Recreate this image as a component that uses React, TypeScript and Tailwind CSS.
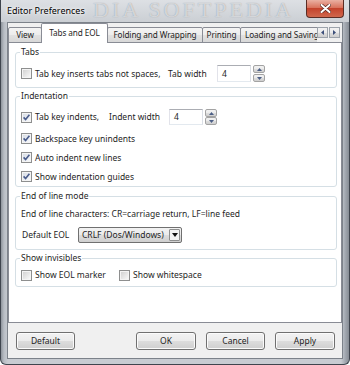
import React from "react";

const btnBg =
  "bg-[linear-gradient(to_bottom,#f2f2f2_0%,#ebebeb_50%,#dddddd_51%,#cfcfcf_100%)]";
const tabBg =
  "bg-[linear-gradient(to_bottom,#f4f4f4_0%,#ececec_50%,#e1e1e1_51%,#d8d8d8_100%)]";

function Check({ checked = false }: { checked?: boolean }) {
  return (
    <span className="relative w-[11px] h-[11px] shrink-0 border border-[#8e8f8f] bg-[#f4f4f4]">
      <span
        className={`absolute inset-[1px] ${
          checked
            ? "bg-[linear-gradient(135deg,#d9dee6,#f7f8fa)]"
            : "bg-[linear-gradient(135deg,#d3d3d3,#f7f7f7)]"
        }`}
      />
      {checked && (
        <svg className="absolute left-0 top-0" width="9" height="9" viewBox="0 0 9 9">
          <path d="M1.6 4.4 L3.6 6.6 L7.4 1.8" fill="none" stroke="#4b5d8c" strokeWidth="1.6" />
        </svg>
      )}
    </span>
  );
}

function Spin() {
  return (
    <div className="ml-[2px] flex h-full w-[12px] flex-col justify-between">
      <span className={`flex h-[8px] items-center justify-center rounded-[2px] border border-[#a3a3a3] ${btnBg}`}>
        <svg width="5" height="3" viewBox="0 0 5 3">
          <path d="M0 3 L2.5 0 L5 3Z" fill="#4c5f86" />
        </svg>
      </span>
      <span className={`flex h-[8px] items-center justify-center rounded-[2px] border border-[#a3a3a3] ${btnBg}`}>
        <svg width="5" height="3" viewBox="0 0 5 3">
          <path d="M0 0 L2.5 3 L5 0Z" fill="#4c5f86" />
        </svg>
      </span>
    </div>
  );
}

function Num() {
  return (
    <div className="flex h-full w-[34px] items-center border border-[#abadb3] border-b-[#e3e9ef] border-l-[#e2e3ea] border-r-[#dbdfe6] bg-white pl-[4px]">
      4
    </div>
  );
}

function Group({
  label,
  className,
  children,
}: {
  label: string;
  className: string;
  children: React.ReactNode;
}) {
  return (
    <div className={`relative rounded-[3px] border border-[#d5dfe5] pl-[5px] ${className}`}>
      <span className="absolute left-[4px] top-[-7px] bg-white px-[1px] leading-[12px]">{label}</span>
      {children}
    </div>
  );
}

function Btn({ label, w }: { label: string; w: string }) {
  return (
    <div
      className={`flex h-[18px] ${w} items-center justify-center rounded-[3px] border border-[#707070] ${btnBg} shadow-[inset_0_0_0_1px_#fbfbfb]`}
    >
      {label}
    </div>
  );
}

function Tab({ label, w, active = false }: { label: string; w: string; active?: boolean }) {
  if (active) {
    return (
      <div className={`-ml-[1px] flex h-[20px] ${w} shrink-0 items-center justify-center overflow-hidden rounded-t-[2px] border border-b-0 border-[#898c95] bg-white pb-[2px]`}>
        {label}
      </div>
    );
  }
  return (
    <div className={`-ml-[1px] flex h-[16px] ${w} shrink-0 items-center justify-center overflow-hidden rounded-t-[2px] border border-[#898c95] ${tabBg}`}>
      {label}
    </div>
  );
}

export default function App() {
  return (
    <div className="relative h-[365px] w-[350px] overflow-hidden rounded-b-[6px] border-x border-b border-[#3f454e] bg-[linear-gradient(to_right,#8e949c_0px,#b8bdc4_3px,#c8ccd2_7px,#c8ccd2_340px,#a4aab2_344px,#80868e_349px)] font-['Noto_Sans',sans-serif] text-[8.5px] leading-[12px] text-[#1e1e1e]">
      {/* title bar */}
      <div className="relative flex h-[22px] items-center overflow-hidden bg-[linear-gradient(to_bottom,#dde0e4,#cbcfd4)] pl-[6px]">
        <span className="absolute left-[92px] top-[-3px] whitespace-nowrap font-['Liberation_Serif',serif] text-[22px] leading-[26px] tracking-[3px] text-white/60 [text-shadow:0_0_1px_#8a9098]">
          DIA SOFTPEDIA
        </span>
        <span className="relative text-[9px] text-black [text-shadow:0_0_4px_#fff,0_0_2px_#fff]">
          Editor Preferences
        </span>
      </div>

      {/* close button */}
      <div className="absolute right-[5px] top-0 flex h-[18px] w-[38px] items-center justify-center rounded-b-[4px] border border-t-0 border-[#5b2d25] bg-[linear-gradient(to_bottom,#eab0a2_0%,#d9735d_45%,#c4432c_50%,#d0674c_100%)]">
        <svg width="11" height="9" viewBox="0 0 11 9">
          <path d="M1.5 1 L9.5 8 M9.5 1 L1.5 8" stroke="#5a2a22" strokeWidth="3.4" strokeLinecap="round" />
          <path d="M1.5 1 L9.5 8 M9.5 1 L1.5 8" stroke="#ffffff" strokeWidth="2" strokeLinecap="round" />
        </svg>
      </div>

      {/* client area */}
      <div className="relative ml-[6px] flex h-[337px] w-[336px] flex-col border border-[#7c828a] bg-[#f0f0f0]">
        {/* tabs */}
        <div className="relative z-10 flex h-[20px] w-[309px] items-end overflow-hidden whitespace-nowrap pl-[1px] text-[8.2px] tracking-[-0.1px]">
          <Tab label="View" w="w-[34px]" />
          <Tab label="Tabs and EOL" w="w-[67px]" active />
          <Tab label="Folding and Wrapping" w="w-[96px]" />
          <Tab label="Printing" w="w-[39px]" />
          <div className={`-ml-[1px] flex h-[16px] w-[100px] shrink-0 items-center rounded-t-[2px] border border-[#898c95] pl-[4px] ${tabBg}`}>
            Loading and Saving
          </div>
        </div>
        <div className="absolute left-[309px] top-[4px] z-20 flex gap-[1px]">
          <span className={`flex h-[11px] w-[11px] items-center justify-center border border-[#9ca3ab] ${btnBg}`}>
            <svg width="3" height="5" viewBox="0 0 3 5">
              <path d="M3 0 L0 2.5 L3 5Z" fill="#3c4f7a" />
            </svg>
          </span>
          <span className={`flex h-[11px] w-[11px] items-center justify-center border border-[#9ca3ab] ${btnBg}`}>
            <svg width="3" height="5" viewBox="0 0 3 5">
              <path d="M0 0 L3 2.5 L0 5Z" fill="#3c4f7a" />
            </svg>
          </span>
        </div>

        {/* tab panel */}
        <div className="-mt-[1px] h-[281px] w-[334px] border border-[#898c95] bg-white pl-[6px] pr-[4px] pt-[9px]">
          <Group label="Tabs" className="pb-[5px] pt-[12px]">
            <div className="flex h-[17px] items-center">
              <Check />
              <span className="ml-[3px] w-[133px]">Tab key inserts tabs not spaces,</span>
              <span className="w-[49px]">Tab width</span>
              <Num />
              <Spin />
            </div>
          </Group>

          <Group label="Indentation" className="mt-[8px] pt-[12px]">
            <div className="flex h-[16px] items-center">
              <Check checked />
              <span className="ml-[3px] w-[74px]">Tab key indents,</span>
              <span className="w-[60px]">Indent width</span>
              <Num />
              <Spin />
            </div>
            <div className="mt-[4px] flex h-[19px] items-center">
              <Check checked />
              <span className="ml-[3px]">Backspace key unindents</span>
            </div>
            <div className="flex h-[19px] items-center">
              <Check checked />
              <span className="ml-[3px]">Auto indent new lines</span>
            </div>
            <div className="flex h-[19px] items-center">
              <Check checked />
              <span className="ml-[3px]">Show indentation guides</span>
            </div>
          </Group>

          <Group label="End of line mode" className="mt-[9px] pb-[6px] pt-[9px]">
            <div className="flex h-[16px] items-center">
              End of line characters: CR=carriage return, LF=line feed
            </div>
            <div className="mt-[5px] flex h-[16px] items-center">
              <span className="w-[57px] pl-[1px]">Default EOL</span>
              <div className={`flex h-full w-[104px] items-center justify-between rounded-[2px] border border-[#707070] ${btnBg} pl-[3px] pr-[1px]`}>
                <span>CRLF (Dos/Windows)</span>
                <span className="flex h-[12px] w-[11px] items-center justify-center rounded-[1px] border border-[#8e8f8f] bg-[#f3f3f3]">
                  <svg width="6" height="4" viewBox="0 0 6 4">
                    <path d="M0 0 L6 0 L3 4Z" fill="#111" />
                  </svg>
                </span>
              </div>
            </div>
          </Group>

          <Group label="Show invisibles" className="mt-[8px] pb-[3px] pt-[8px]">
            <div className="flex h-[16px] items-center">
              <Check />
              <span className="ml-[3px] w-[84px]">Show EOL marker</span>
              <Check />
              <span className="ml-[3px]">Show whitespace</span>
            </div>
          </Group>
        </div>

        {/* buttons */}
        <div className="flex items-start justify-between pl-[8px] pr-[7px] pt-[9px]">
          <Btn label="Default" w="w-[59px]" />
          <div className="flex gap-[10px]">
            <Btn label="OK" w="w-[60px]" />
            <Btn label="Cancel" w="w-[59px]" />
            <Btn label="Apply" w="w-[60px]" />
          </div>
        </div>
      </div>
    </div>
  );
}
